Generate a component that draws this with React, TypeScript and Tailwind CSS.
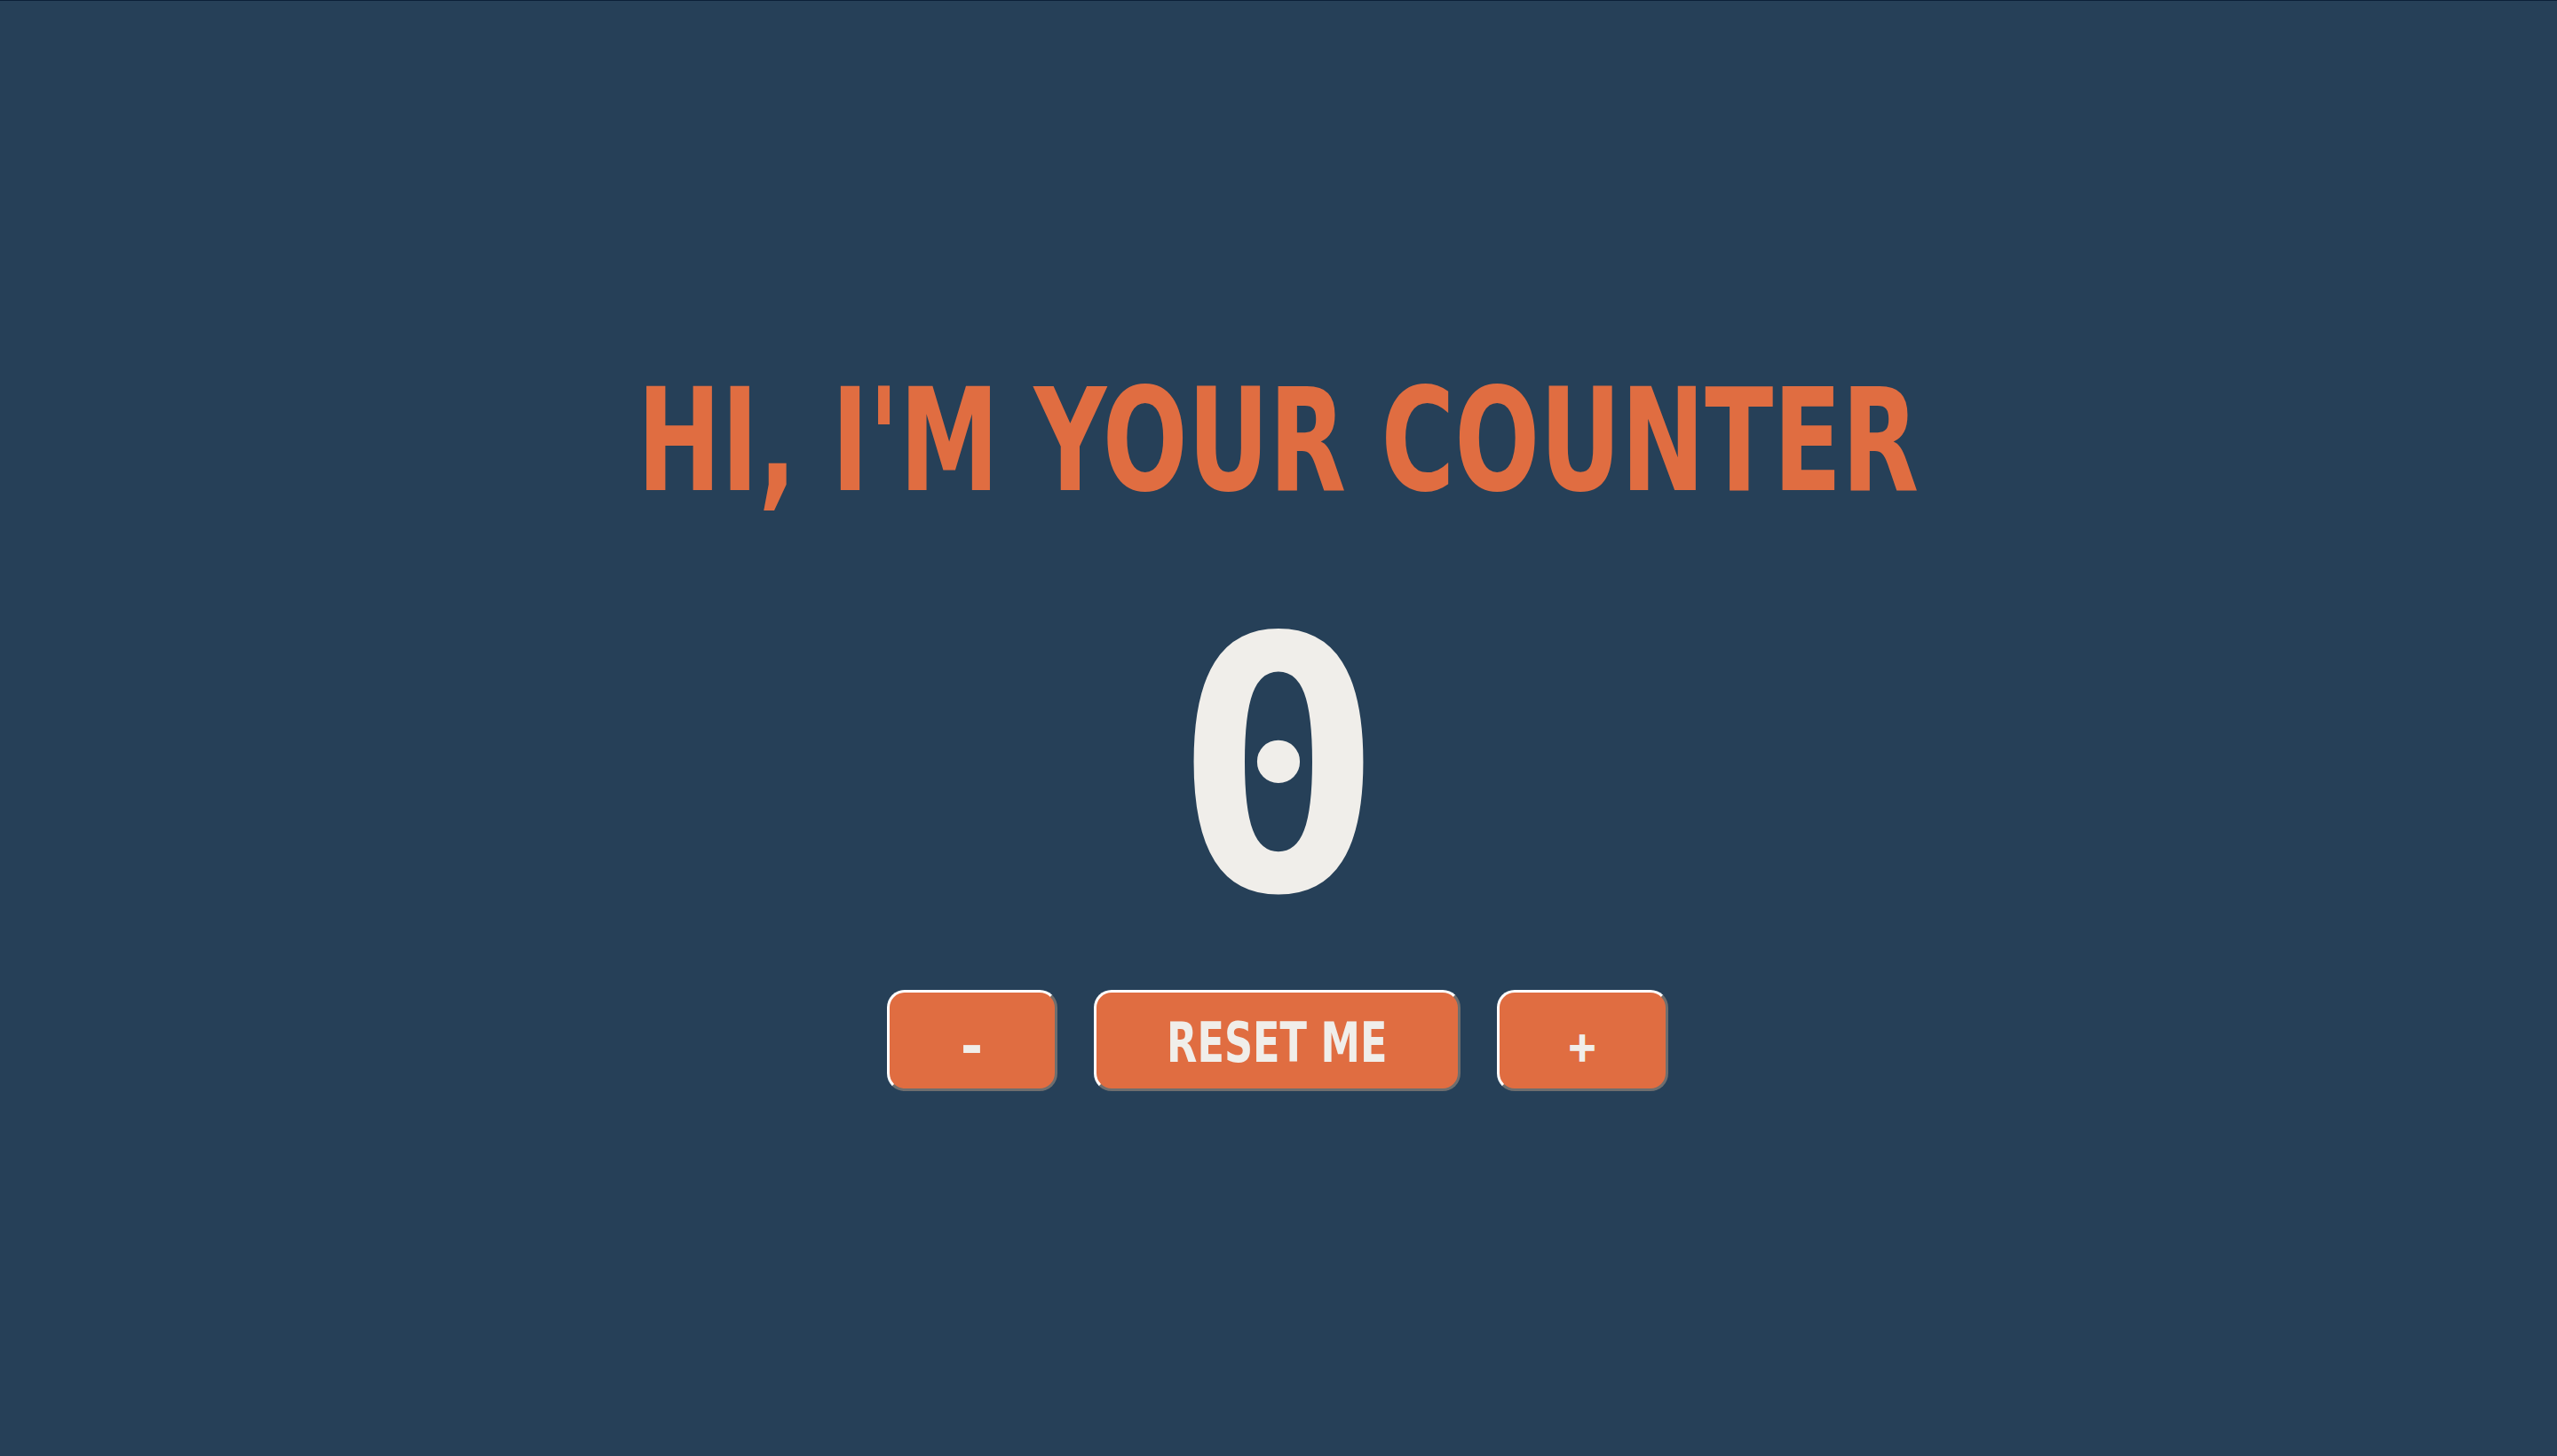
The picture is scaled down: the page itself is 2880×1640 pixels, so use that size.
import { useState } from 'react';

const headFont = "font-['DejaVu_Sans_Condensed','DejaVu_Sans',sans-serif] font-stretch-condensed font-bold";

function CounterButton({
    label,
    onClick,
    className,
    labelClass,
}: {
    label: string;
    onClick: () => void;
    className: string;
    labelClass: string;
}) {
    return (
        <button
            onClick={onClick}
            className={`${className} h-[114px] pt-[6px] flex items-center justify-center rounded-[20px] border-[3px] border-t-white border-l-white border-r-[#6e6e6e] border-b-[#6e6e6e] bg-[#e06d41] text-[#f0eeea] leading-none ${headFont} cursor-pointer`}
        >
            <span className={`inline-block ${labelClass}`}>{label}</span>
        </button>
    );
}

export default function App() {
    const [count, setCount] = useState(0);

    return (
        <div className="min-h-[1640px] w-full bg-[#264058] border-t border-[#0c2038] flex flex-col items-center">
            <h1 className={`mt-[416px] text-[160px] leading-none text-[#e06d41] scale-x-[0.784] whitespace-nowrap ${headFont}`}>
                HI, I'M YOUR COUNTER
            </h1>
            <div className="mt-[90px] text-[396px] leading-none text-[#f0eeea] font-['DejaVu_Sans_Mono',monospace] font-bold">
                {count}
            </div>
            <div className="mt-[52px] -ml-[3px] flex gap-[41px]">
                <CounterButton
                    label="-"
                    className="w-[192px]"
                    labelClass="mt-[8px] text-[62px] scale-x-[1.1]"
                    onClick={() => setCount(count - 1)}
                />
                <CounterButton
                    label="RESET ME"
                    className="w-[413px]"
                    labelClass="text-[62px] scale-x-[0.8]"
                    onClick={() => setCount(0)}
                />
                <CounterButton
                    label="+"
                    className="w-[193px]"
                    labelClass="mt-[8px] text-[46px] [-webkit-text-stroke:1.5px_#f0eeea]"
                    onClick={() => setCount(count + 1)}
                />
            </div>
        </div>
    );
}
